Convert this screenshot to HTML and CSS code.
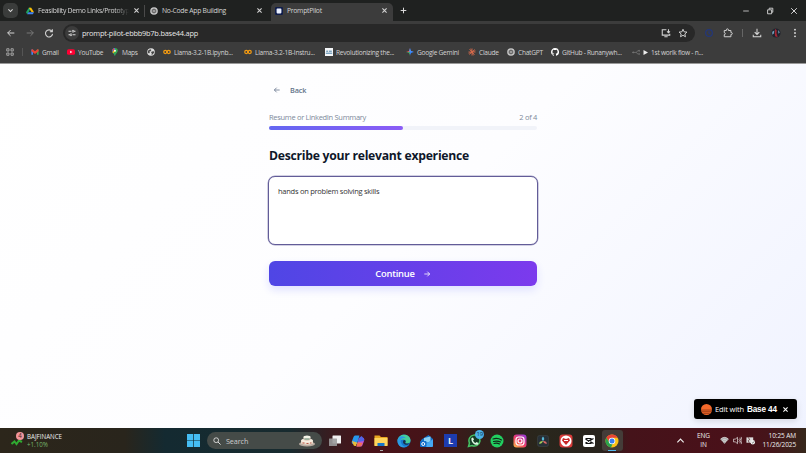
FILE: index.html
```html
<!DOCTYPE html>
<html lang="en">
<head>
    <meta charset="UTF-8">
    <meta name="viewport" content="width=device-width, initial-scale=1.0">
    <title>PromptPilot</title>
    <link rel="stylesheet" href="styles.css">
</head>
<body>
    <!-- Shared icons -->
    <svg class="defs" width="0" height="0">
        <symbol id="close" viewBox="0 0 10 10"><path d="M2 2l6 6M8 2L2 8" stroke="currentColor" stroke-width="1.5"/></symbol>
        <symbol id="arrow" viewBox="0 0 24 24"><path d="M4 12h16M13 5l7 7-7 7" fill="none" stroke="currentColor" stroke-width="2.4"/></symbol>
        <symbol id="gpt" viewBox="0 0 20 20">
            <circle cx="10" cy="10" r="9.5" fill="#c9c9c9"/>
            <g fill="none" stroke="#444" stroke-width="1.1">
                <ellipse cx="10" cy="10" rx="3" ry="6"/>
                <ellipse cx="10" cy="10" rx="3" ry="6" transform="rotate(60 10 10)"/>
                <ellipse cx="10" cy="10" rx="3" ry="6" transform="rotate(120 10 10)"/>
            </g>
        </symbol>
        <symbol id="colab" viewBox="0 0 20 20">
            <g fill="none" stroke="#f29a12" stroke-width="3.2"><circle cx="5.7" cy="10" r="3.8"/><circle cx="14.3" cy="10" r="3.8"/></g>
        </symbol>
    </svg>

    <header class="browser">
        <div class="tabs">
            <span class="tab-search"><svg viewBox="0 0 10 10"><path d="M2 3.5l3 3 3-3" fill="none" stroke="#ddd" stroke-width="1.5"/></svg></span>
            <div class="tab tab-drive">
                <svg class="icon" viewBox="0 0 20 20"><path d="M7 2h6l-7 12-3 4-3-5z" fill="#1fa463"/><path d="M7 2h6l7 11h-6z" fill="#fbbc04"/><path d="M6 13h14l-3 5H3z" fill="#4285f4"/></svg>
                <span class="tab-title fade">Feasibility Demo Links/Prototyp</span>
                <svg class="close"><use href="#close"/></svg>
            </div>
            <div class="tab tab-builder">
                <svg class="icon"><use href="#gpt"/></svg>
                <span class="tab-title">No-Code App Building</span>
                <svg class="close"><use href="#close"/></svg>
            </div>
            <div class="tab active">
                <svg class="icon" viewBox="0 0 20 20"><rect width="20" height="20" rx="3" fill="#101d4b"/><rect x="4" y="4" width="12" height="12" rx="2" fill="#e9efff"/></svg>
                <span class="tab-title">PromptPilot</span>
                <svg class="close"><use href="#close"/></svg>
            </div>
            <svg class="new-tab" viewBox="0 0 10 10"><path d="M5 1v8M1 5h8" stroke="#ddd" stroke-width="1.4"/></svg>
            <div class="window-controls">
                <svg viewBox="0 0 10 10"><path d="M1.5 5h7" stroke="#ddd"/></svg>
                <svg viewBox="0 0 10 10"><path d="M2 3.5h5v5H2zM4 3V1.5h4.5v5H7.5" fill="none" stroke="#ddd" stroke-width="1.1"/></svg>
                <svg viewBox="0 0 10 10"><path d="M1.5 1.5l7 7M8.5 1.5l-7 7" stroke="#ddd" stroke-width="1.2"/></svg>
            </div>
        </div>

        <div class="toolbar">
            <svg class="nav flip"><use href="#arrow"/></svg>
            <svg class="nav disabled"><use href="#arrow"/></svg>
            <svg class="nav" viewBox="0 0 24 24"><path d="M19 8a8.5 8.5 0 1 0 1.5 6M20 3v6h-6" fill="none" stroke="currentColor" stroke-width="2.6"/></svg>
            <div class="address">
                <span class="site-info"><svg viewBox="0 0 16 16"><path d="M1 4.5h5M11.5 4.5H15M1 11.5h3.500M10 11.5h5" stroke="#ddd" stroke-width="1.9"/><g fill="none" stroke="#ddd" stroke-width="1.7"><circle cx="10" cy="4.5" r="2"/><circle cx="6" cy="11.5" r="2"/></g></svg></span>
                <span class="url">prompt-pilot-ebbb9b7b.base44.app</span>
                <svg class="nav" viewBox="0 0 24 24"><path d="M13 4H3v13h18v-3M8 21h8M18 3v8M14.5 8l3.5 3.5L21.5 8" fill="none" stroke="currentColor" stroke-width="2.6"/></svg>
                <svg class="nav" viewBox="0 0 24 24"><path d="M12 3l2.700 6.200 6.800.6-5.100 4.500 1.500 6.700-5.900-3.500L6.100 21l1.500-6.700-5.100-4.500 6.800-.6z" fill="none" stroke="currentColor" stroke-width="2.3"/></svg>
            </div>
            <div class="extensions">
                <svg viewBox="0 0 24 24"><g fill="none" stroke="#23377a" stroke-width="3"><circle cx="12" cy="12" r="8"/><path d="M12 8v4l3 2"/></g></svg>
                <svg viewBox="0 0 24 24"><path d="M3 6h5V4.500a2.500 2.500 0 0 1 5 0V6h6v5h1a2.300 2.300 0 0 1 0 4.600h-1V21H3v-5a2.500 2.500 0 0 0 0-5z" fill="none" stroke="#d0d0d0" stroke-width="2.4"/></svg>
                <i class="divider"></i>
                <svg viewBox="0 0 24 24"><path d="M12 2v13M6.500 10l5.500 5.500 5.500-5.500M3 16v5h18v-5" fill="none" stroke="#d6d6d6" stroke-width="2.5"/></svg>
                <svg viewBox="0 0 24 24"><circle cx="12" cy="12" r="11" fill="#20232e"/><path d="M10 2l4 4-1 6 3 10-6-2-1-8z" fill="#a32634"/><path d="M3 9l5-3-1 7-4 3zM17 5l4 5-3 4z" fill="#6fa0bb"/></svg>
                <svg viewBox="0 0 24 24" fill="#ddd"><circle cx="12" cy="4" r="2.200"/><circle cx="12" cy="12" r="2.200"/><circle cx="12" cy="20" r="2.200"/></svg>
            </div>
        </div>

        <nav class="bookmarks">
            <span class="apps"><svg viewBox="0 0 16 16" fill="none" stroke="#bbb" stroke-width="1.6"><path d="M1.5 1.5h4.500v4.500H1.500zM10 1.500h4.500v4.500H10zM1.500 10h4.500v4.500H1.500zM10 10h4.500v4.500H10z"/></svg></span>
            <a><svg viewBox="0 0 20 20"><path d="M1 4h4v13H1z" fill="#4285f4"/><path d="M15 4h4v13h-4z" fill="#34a853"/><path d="M1 4l3-1 6 5 6-5 3 1v4l-9 7-9-7z" fill="#ea4335"/></svg>Gmail</a>
            <a><svg viewBox="0 0 20 20"><rect y="3" width="20" height="14" rx="4" fill="#f03"/><path d="M8 7l5.500 3L8 13z" fill="#fff"/></svg>YouTube</a>
            <a><svg viewBox="0 0 20 20"><path d="M10 20C9 14 3 12 3 7a7 7 0 0 1 7-7v7z" fill="#4285f4"/><path d="M10 0a7 7 0 0 1 7 7c0 5-6 7-7 13L5 12l5-5z" fill="#34a853"/><path d="M3.500 10L8 5l3 3-6 5z" fill="#fbbc04"/><path d="M4 3.500A7 7 0 0 1 7 .7L9 4 5 8z" fill="#ea4335"/><circle cx="10" cy="7" r="2.400" fill="#fff"/></svg>Maps</a>
            <a><svg viewBox="0 0 20 20"><circle cx="10" cy="10" r="9.500" fill="#ddd"/><path d="M3 6l5-3 3 2-2 3-3 1 1 3-2 2-3-3zM12 9l5-1 1 3-4 5-3 1 1-4-2-2z" fill="#454545"/></svg></a>
            <a><svg><use href="#colab"/></svg>Llama-3.2-1B.ipynb...</a>
            <a><svg><use href="#colab"/></svg>Llama-3.2-1B-Instru...</a>
            <a><svg viewBox="0 0 20 20"><rect width="20" height="20" fill="#f4f6f8"/><path d="M3 8h5M10 8h7M2 13h16" stroke="#2d6d9b" stroke-width="2.2"/></svg>Revolutionizing the...</a>
            <a><svg viewBox="0 0 20 20"><path d="M10 0c1 7 3 9 10 10-7 1-9 3-10 10z" fill="#3186ff"/><path d="M10 0c-1 7-3 9-10 10h10z" fill="#ef5e4e"/><path d="M0 10c7 1 9 3 10 10V10z" fill="#45a86c"/><path d="M10 0c1 7 3 9 10 10H8V6z" fill="#4c8df6"/></svg>Google Gemini</a>
            <a><svg viewBox="0 0 20 20"><path d="M10 1v18M1 10h18M3.500 3.500l13 13M16.500 3.500l-13 13M6.500 1.700l7 16.600M1.700 13.500l16.600-7" stroke="#d96b4b" stroke-width="2"/></svg>Claude</a>
            <a><svg><use href="#gpt"/></svg>ChatGPT</a>
            <a><svg viewBox="0 0 16 16"><path fill="#fff" d="M8 0C3.580 0 0 3.580 0 8c0 3.540 2.290 6.530 5.470 7.590.4.070.550-.170.550-.380v-1.490c-2.230.480-2.700-.940-2.700-.940-.360-.920-.890-1.170-.890-1.170-.730-.500.050-.490.050-.490.810.060 1.230.830 1.230.830.720 1.230 1.880.870 2.330.660.070-.520.280-.870.510-1.070-1.780-.200-3.640-.890-3.640-3.950 0-.870.310-1.590.820-2.150-.080-.200-.360-1.020.080-2.120 0 0 .670-.210 2.200.820a7.600 7.600 0 0 1 4 0c1.530-1.040 2.200-.820 2.200-.820.440 1.100.160 1.920.080 2.120.510.560.820 1.270.820 2.150 0 3.070-1.870 3.750-3.650 3.950.290.250.540.730.540 1.480v2.200c0 .210.150.460.550.380A8 8 0 0 0 8 0z"/></svg>GitHub - Runanywh...</a>
            <a><svg viewBox="0 0 20 20" fill="none" stroke="#858585" stroke-width="1.5"><path d="M1 11h10l3-4h5M11 11l3 4h3"/><circle cx="3" cy="11" r="1.500"/><circle cx="18" cy="7" r="1.300"/><circle cx="18" cy="15" r="1.300"/></svg><svg class="play" viewBox="0 0 10 10"><path d="M1 0l9 5-9 5z" fill="#eee"/></svg>1st worlk flow - n...</a>
        </nav>
    </header>

    <main class="page">
        <div class="form">
            <a class="back"><svg class="flip"><use href="#arrow"/></svg>Back</a>
            <div class="step"><span class="step-name">Resume or LinkedIn Summary</span><span>2 of 4</span></div>
            <div class="progress"><div class="progress-fill"></div></div>
            <h1>Describe your relevant experience</h1>
            <div class="answer">hands on problem solving skills</div>
            <button class="continue"><span>Continue</span><svg><use href="#arrow"/></svg></button>
        </div>
        <div class="badge">
            <svg class="badge-logo" viewBox="0 0 20 20"><circle cx="10" cy="10" r="10" fill="#f4692b"/><path d="M0 11h20M1 14h18M4 17h12" stroke="#571c08" stroke-width="1"/></svg>
            <span class="badge-text">Edit with</span>
            <b>Base 44</b>
            <svg class="close"><use href="#close"/></svg>
        </div>
    </main>

    <footer class="taskbar">
        <div class="widget">
            <div class="stock-icon">
                <svg viewBox="0 0 24 24"><path d="M1 18l6-5 4 5 5-7 6 3" fill="none" stroke="#2faa31" stroke-width="4"/></svg>
                <span class="count">4</span>
            </div>
            <div><div>BAJFINANCE</div><div class="up">+1.10%</div></div>
        </div>
        <svg class="start" viewBox="0 0 26 26"><path d="M0 0h12.300v12.300H0zM13.700 0H26v12.300H13.700zM0 13.700h12.300V26H0zM13.700 13.700H26V26H13.700z" fill="#45bdf3"/></svg>
        <div class="search">
            <svg class="lens" viewBox="0 0 20 20"><circle cx="8" cy="8" r="6" fill="none" stroke="#eee" stroke-width="2"/><path d="M12.500 12.500L19 19" stroke="#eee" stroke-width="2.2"/></svg>
            <span>Search</span>
            <svg class="cake" viewBox="0 0 32 26"><ellipse cx="16" cy="20" rx="16" ry="5" fill="#b9aaa0"/><path d="M4 13h24v6q-12 5-24 0z" fill="#eadbca"/><ellipse cx="16" cy="13" rx="12" ry="4" fill="#f7eee2"/><path d="M9 6h14v6q-7 3-14 0z" fill="#d9c9b8"/><ellipse cx="16" cy="6" rx="7" ry="3" fill="#f5f3e8"/><path d="M7 18h4M15 19h4M22 18h3" stroke="#b9564a" stroke-width="2"/><path d="M11 10h10" stroke="#62927d" stroke-width="2"/></svg>
        </div>
        <div class="pinned">
            <span><svg viewBox="0 0 28 28"><rect x="9" y="3" width="17" height="16" rx="1" fill="#f1f1f1"/><rect x="2" y="9" width="16" height="15" rx="1" fill="#9b9b9b" opacity=".9"/></svg></span>
            <span><svg viewBox="0 0 28 28"><path d="M8 3h9l-5 17H5c-4 0-4-3-3-6l3-8q1-3 3-3z" fill="#2798ed"/><path d="M2 14l10 3-2 7H8c-3 0-3-3-4-4z" fill="#e9bd39"/><path d="M20 25h-9l5-17h7c4 0 4 3 3 6l-3 8q-1 3-3 3z" fill="#ca54cf"/><path d="M16 8l5-4 4 4q2 2 1 6l-12 2z" fill="#5264e8"/><path d="M13 17l10 1-2 5q-1 2-4 2h-6z" fill="#ef6f55"/></svg></span>
            <span class="open"><svg viewBox="0 0 28 28"><path d="M1 3h10l3 3h13v17H1z" fill="#e8a520"/><path d="M1 8h26v16H1z" fill="#ffd45d"/><path d="M7 18h14v6H7z" fill="#1976c9"/></svg></span>
            <span><svg viewBox="0 0 28 28"><circle cx="14" cy="14" r="13" fill="#1678cf"/><path d="M1 13C3-3 27-2 27 13c0 6-7 7-11 5 3-3 1-7-3-7-5 0-7 3-12 2z" fill="#46ce97"/><path d="M1 13C3 3 14 2 18 9c-7-3-12 2-10 8 2 7 8 9 13 8C11 30 0 23 1 13z" fill="#2b9be3"/><path d="M16 18c4 2 8 1 10 0-3 4-9 5-13 1-2-3-1-7 2-7 3 1 3 4 1 6z" fill="#17314b"/></svg></span>
            <span><svg viewBox="0 0 28 28"><path d="M3 11L17 2l9 8v11H3z" fill="#1470c7"/><path d="M8 8l13-3v12H8z" fill="#8bd2f6"/><path d="M2 12l12 7 12-9v13q0 3-3 3H5q-3 0-3-3z" fill="#2189e4"/><path d="M10 21l16-10v12q0 3-3 3H10z" fill="#45a8f3"/><rect y="14" width="13" height="12" rx="2" fill="#126bc7"/><circle cx="6.500" cy="20" r="3" fill="none" stroke="#fff" stroke-width="2"/></svg></span>
            <span><b class="letter">L</b></span>
            <span class="whatsapp"><svg viewBox="0 0 28 28"><path d="M3 25l2-7a11 11 0 1 1 5 5z" fill="#163d26" stroke="#46c364" stroke-width="3"/><path d="M9 8l3-1 2 4-2 2q2 4 5 5l2-2 4 2-1 3c-7 3-15-6-13-13z" fill="#d9f7df"/></svg><em class="unread">19</em></span>
            <span><svg viewBox="0 0 28 28"><circle cx="14" cy="14" r="13" fill="#22cf60"/><path d="M6 10q9-3 17 2M7 15q8-2 14 1M8 19q6-2 11 1" fill="none" stroke="#102a19" stroke-width="2.3" stroke-linecap="round"/></svg></span>
            <span><svg viewBox="0 0 28 28"><defs><linearGradient id="insta" x1="0" y1="1" x2=".8" y2="0"><stop stop-color="#ffc247"/><stop offset=".5" stop-color="#f03e69"/><stop offset="1" stop-color="#9d3bd1"/></linearGradient></defs><rect x="1" y="1" width="26" height="26" rx="6" fill="url(#insta)"/><g fill="none" stroke="#fff" stroke-width="2.4"><rect x="6" y="6" width="16" height="16" rx="5"/><circle cx="14" cy="14" r="4"/></g></svg></span>
            <span><svg viewBox="0 0 28 28"><rect x="3" y="3" width="22" height="22" rx="4" fill="#273037" stroke="#43494b"/><path d="M14 14Q9 10 14 5q5 5 0 9z" fill="#58b8d8"/><path d="M14 14q-2 7-8 5 1-6 8-5z" fill="#a1c95b"/><path d="M14 14q7-1 8 5-6 2-8-5z" fill="#db6966"/></svg></span>
            <span><svg viewBox="0 0 28 28"><rect x="1" y="1" width="26" height="26" rx="6" fill="#d83b39"/><circle cx="14" cy="14" r="11" fill="#fff"/><path d="M14 22L6 13l2-5 6 2 6-2 2 5z" fill="#c92828"/><path d="M10 13h8" stroke="#fff" stroke-width="2"/></svg></span>
            <span><svg viewBox="0 0 28 28"><rect x="2" y="2" width="24" height="24" rx="4" fill="#fff"/><path d="M7 9h11v3l5-3M7 19h11v-3l5 3M7 10l11 7M7 18l11-7" fill="none" stroke="#111" stroke-width="2.3"/></svg></span>
            <span class="current"><svg viewBox="0 0 28 28"><circle cx="14" cy="14" r="13" fill="#fbc116"/><path d="M2.700 7.500A13 13 0 0 1 25.300 7.500H14L9 17z" fill="#e84435"/><path d="M2.700 7.500L9 17l6 3-3 6.900A13 13 0 0 1 2.700 7.500z" fill="#2ba24c"/><circle cx="14" cy="14" r="6.500" fill="#fff"/><circle cx="14" cy="14" r="5" fill="#3a7df0"/></svg></span>
        </div>
        <div class="tray">
            <svg class="chevron" viewBox="0 0 10 10"><path d="M1.500 7L5 3.500 8.500 7" fill="none" stroke="#eee" stroke-width="1.3"/></svg>
            <div class="lang">ENG<br>IN</div>
            <svg viewBox="0 0 20 20"><path d="M1 7q9-8 18 0L10 18z" fill="#aaa"/><path d="M1 7q9-8 18 0M4 10q6-5 12 0M7 13q3-3 6 0" fill="none" stroke="#eee" stroke-width="1.5"/></svg>
            <svg viewBox="0 0 20 20"><path d="M1 7h4l5-4v14l-5-4H1zM13 7q3 3 0 6M15 4q5 6 0 12M18 2q5 8 0 16" fill="none" stroke="#eee" stroke-width="1.5"/></svg>
            <svg viewBox="0 0 20 20"><path d="M1 3h15v12H1z" fill="#ddd"/><path d="M5 3l3 5-3 2 2 5" fill="none" stroke="#431118" stroke-width="1.5"/><circle cx="15" cy="14" r="5" fill="#f1f1f1"/><path d="M13 14l2 2 3-4" fill="none" stroke="#333" stroke-width="1.3"/></svg>
            <div class="clock">10:25 AM<br>11/26/2025</div>
        </div>
    </footer>
</body>
</html>
```
FILE: styles.css
```css
* {
    box-sizing: border-box;
}
body {
    margin: 0;
    width: 806px;
    height: 453px;
    overflow: hidden;
    display: flex;
    flex-direction: column;
    font-family: "Open Sans", "Noto Sans", sans-serif;
    font-size: 6.8px;
    letter-spacing: -0.15px;
}
svg {
    display: block;
    flex: none;
}
.defs {
    position: absolute;
}
.flip {
    transform: scaleX(-1);
}

/* Browser */
.browser {
    height: 64px;
    background: #3c3c3c;
    color: #d3d3d3;
    border-bottom: 1px solid #999;
}
.tabs {
    height: 21px;
    display: flex;
    align-items: center;
    background: #1f2120;
}
.tab-search {
    width: 15px;
    height: 15px;
    margin-left: 3px;
    border-radius: 5px;
    background: #3a3c3b;
    display: grid;
    place-items: center;
}
.tab-search svg {
    width: 7px;
    height: 7px;
}
.tab {
    display: flex;
    align-items: center;
    height: 12px;
    gap: 4px;
    letter-spacing: -0.28px;
}
.tab-drive {
    width: 127px;
    padding: 0 6px 0 8px;
    border-right: 1px solid #4a4a4a;
}
.tab-builder {
    width: 126px;
    padding: 0 8px 0 5px;
}
.tab.active {
    width: 122px;
    height: 18px;
    padding: 0 5px 3px 4px;
    align-self: flex-end;
    background: #3c3c3c;
    border-radius: 5px 5px 0 0;
}
.icon {
    width: 8px;
    height: 8px;
}
.tab-title {
    flex: 1;
    white-space: nowrap;
}
.fade {
    -webkit-mask-image: linear-gradient(90deg, #000 85%, transparent);
    mask-image: linear-gradient(90deg, #000 85%, transparent);
}
.close {
    width: 7px;
    height: 7px;
}
.new-tab {
    width: 7px;
    height: 7px;
    margin-left: 7px;
}
.window-controls {
    margin-left: auto;
    padding-right: 8px;
    display: flex;
    gap: 16px;
}
.window-controls svg {
    width: 8px;
    height: 8px;
}
.toolbar {
    height: 24px;
    display: flex;
    align-items: center;
    padding: 0 6px;
    gap: 9px;
}
.nav {
    width: 10px;
    height: 10px;
}
.disabled {
    color: #777;
}
.address {
    flex: 1;
    height: 18px;
    padding: 0 7px 0 2px;
    display: flex;
    align-items: center;
    gap: 7px;
    border-radius: 9px;
    background: #282828;
}
.site-info {
    width: 14px;
    height: 14px;
    border-radius: 50%;
    background: #3c3c3c;
    display: grid;
    place-items: center;
}
.site-info svg {
    width: 8px;
    height: 8px;
}
.url {
    flex: 1;
    margin-left: -4px;
    font-size: 7.4px;
    letter-spacing: -0.22px;
    color: #e6e6e6;
}
.extensions {
    display: flex;
    align-items: center;
    gap: 9px;
}
.extensions svg {
    width: 10px;
    height: 10px;
}
.divider {
    width: 1px;
    height: 8px;
    background: #666;
}
.bookmarks {
    height: 14px;
    display: grid;
    grid-template-columns: 25px 36px 44px 36px 16px 81px 81px 81px 62px 39px 44px 81px 100px;
    align-items: center;
    padding-left: 6px;
}
.bookmarks a {
    display: flex;
    align-items: center;
    gap: 3px;
    white-space: nowrap;
    font-size: 6.6px;
    letter-spacing: -0.26px;
}
.bookmarks svg {
    width: 8px;
    height: 8px;
}
.bookmarks .play {
    width: 5px;
    height: 5px;
}
.apps {
    width: 17px;
    border-right: 1px solid #555;
}

/* Page */
.page {
    flex: 1;
    position: relative;
    background: linear-gradient(135deg, #fff 0%, #fdfdff 50%, #f0f3ff 100%);
}
.form {
    width: 268px;
    margin: 0 auto;
    padding-top: 18px;
    color: #0f172a;
}
.back {
    display: flex;
    align-items: center;
    height: 16px;
    margin-left: 4px;
    gap: 9px;
    font-size: 7.3px;
    font-weight: 600;
    color: #64748b;
}
.back svg {
    width: 8px;
    height: 8px;
}
.step {
    display: flex;
    justify-content: space-between;
    margin-top: 13px;
    font-size: 7.5px;
    letter-spacing: -0.31px;
    line-height: 12px;
    color: #7d899b;
}
.progress {
    height: 4px;
    margin-top: 3px;
    border-radius: 2px;
    background: #f1f3f9;
}
.progress-fill {
    width: 50%;
    height: 4px;
    border-radius: 2px;
    background: linear-gradient(90deg, #6366f1, #8b5cf6);
}
h1 {
    margin: 17px 0 0;
    font-size: 12.2px;
    letter-spacing: -0.26px;
    line-height: 18px;
    font-weight: 700;
    white-space: nowrap;
}
.answer {
    height: 69px;
    margin: 11px -1px 0;
    padding: 8px 9px;
    border: 1px solid #625c98;
    border-radius: 7px;
    box-shadow: 0 0 0 0.5px #a5a1c6;
    background: #fff;
    font-size: 7.5px;
    letter-spacing: -0.26px;
    line-height: 12px;
    color: #333;
}
.continue {
    width: 100%;
    height: 25px;
    margin-top: 16px;
    padding: 0;
    border: 0;
    border-radius: 6px;
    display: flex;
    align-items: center;
    justify-content: center;
    gap: 8px;
    font-family: inherit;
    font-size: 9.4px;
    letter-spacing: -0.2px;
    font-weight: 600;
    color: #fff;
    background: linear-gradient(90deg, #4f46e5, #7c3aed);
    box-shadow: 0 4px 8px #dfe1ff;
}
.continue svg {
    width: 8px;
    height: 8px;
}
.badge {
    position: absolute;
    right: 9px;
    bottom: 9px;
    width: 103px;
    height: 20px;
    padding: 0 8px 0 7px;
    display: flex;
    align-items: center;
    border-radius: 3px;
    background: #000;
    color: #fff;
    box-shadow: 0 2px 6px rgba(0, 0, 0, 0.12);
    white-space: nowrap;
}
.badge-logo {
    width: 11px;
    height: 11px;
    margin-right: 3px;
}
.badge-text {
    font-size: 7.5px;
}
.badge b {
    margin-left: 3px;
    font-family: "Liberation Sans", sans-serif;
    font-size: 8.2px;
}
.badge .close {
    margin-left: auto;
}

/* Taskbar */
.taskbar {
    height: 25px;
    display: flex;
    align-items: center;
    color: #eee;
    background: linear-gradient(90deg, #2c261b 0, #29251c 125px, #142a31 165px, #182b2f 290px, #381c20 330px, #491218 370px, #451418 430px, #30201b 480px, #29261c 540px, #28231d 600px, #45131a 630px, #4a1019 740px, #45151a 770px, #36271b 806px);
}
.widget {
    width: 187px;
    padding-left: 11px;
    display: flex;
    align-items: center;
    gap: 3px;
    font-size: 6.2px;
    letter-spacing: 0;
    line-height: 8px;
}
.up {
    color: #77b56b;
}
.stock-icon {
    position: relative;
    width: 13px;
}
.stock-icon svg {
    width: 12px;
    height: 12px;
}
.count {
    position: absolute;
    left: 5px;
    top: -3px;
    width: 8px;
    height: 8px;
    border-radius: 50%;
    text-align: center;
    background: #f2959b;
    color: #421d20;
}
.start {
    width: 13px;
    height: 13px;
}
.search {
    width: 115px;
    height: 17px;
    margin-left: 7px;
    padding: 0 7px 0 6px;
    display: flex;
    align-items: center;
    gap: 5px;
    border-radius: 9px;
    background: #454b48;
    color: #ccc;
    font-size: 7.3px;
}
.lens {
    width: 8px;
    height: 8px;
}
.cake {
    width: 16px;
    height: 13px;
    margin-left: auto;
}
.pinned {
    display: grid;
    grid-template-columns: repeat(13, 23.1px);
    margin-left: 1.5px;
}
.pinned span {
    position: relative;
    height: 21px;
    display: grid;
    place-items: center;
}
.pinned svg {
    width: 14px;
    height: 14px;
}
.letter {
    width: 13px;
    height: 13px;
    background: #1d3cb0;
    text-align: center;
    font-size: 9px;
    line-height: 13px;
}
.unread {
    position: absolute;
    right: 1px;
    top: 0;
    width: 9px;
    height: 9px;
    border-radius: 50%;
    text-align: center;
    font-size: 6px;
    line-height: 9px;
    font-style: normal;
    background: #4bb2e8;
    color: #123449;
}
.current {
    border-radius: 3px;
    background: #443c38;
    margin: 0 1px;
}
.current::after,
.open::after {
    content: "";
    position: absolute;
    bottom: 0;
    width: 8px;
    height: 1px;
    background: #56b9ed;
}
.open::after {
    width: 3px;
    background: #aaa;
}
.tray {
    margin-left: auto;
    padding-right: 10px;
    display: flex;
    align-items: center;
    gap: 4px;
    font-size: 6.5px;
    letter-spacing: -0.1px;
    line-height: 8.5px;
    text-align: center;
}
.tray svg {
    width: 9px;
    height: 9px;
}
.lang {
    width: 16px;
    margin: 0 4px 0 7px;
}
.clock {
    margin-left: 4px;
    text-align: right;
}
```
